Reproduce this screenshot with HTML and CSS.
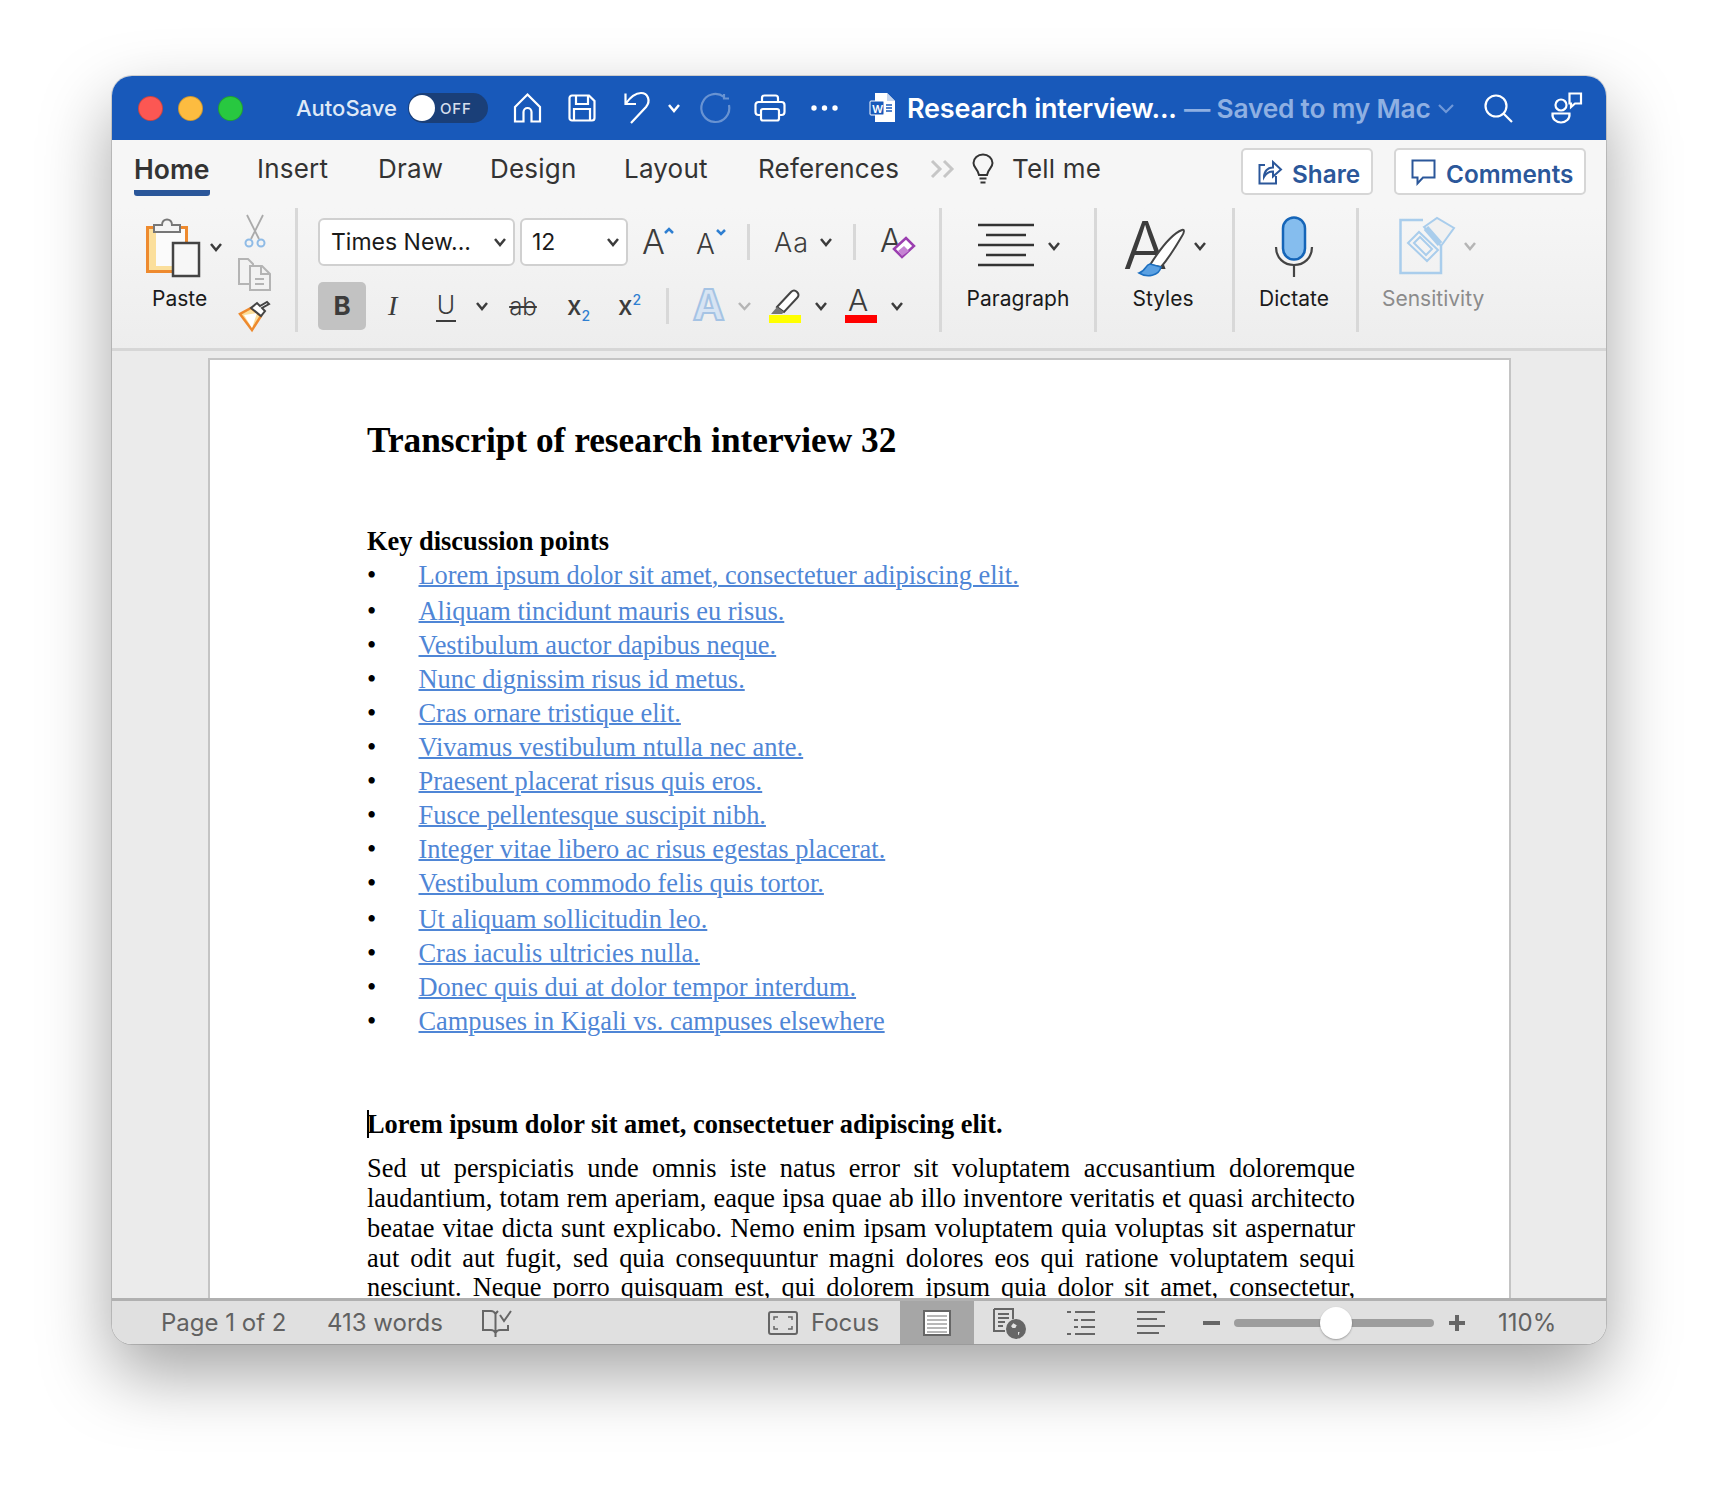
FILE: index.html
```html
<!DOCTYPE html>
<html lang="en">
<head>
    <meta charset="UTF-8">
    <title>Research interview - Word</title>
    <link rel="stylesheet" href="styles.css">
</head>
<body>
    <div class="window">
        <header class="titlebar">
            <span class="light light-red"></span>
            <span class="light light-yellow"></span>
            <span class="light light-green"></span>
            <span class="autosave">AutoSave</span>
            <span class="toggle"><span class="knob"></span><span class="toggle-text">OFF</span></span>
            <svg class="tb-home" width="29" height="30" viewBox="0 0 29 30"><path d="M2 14 14.5 1.5 27 14V28.5H18.5V19a4 4 0 0 0-8 0V28.5H2Z"/></svg>
            <svg class="tb-save" width="28" height="28" viewBox="0 0 28 28"><path d="M4 1.5H21L26.5 7V24a2.5 2.5 0 0 1-2.5 2.5H4A2.5 2.5 0 0 1 1.5 24V4A2.5 2.5 0 0 1 4 1.5Z"/><path d="M8 1.5V10H20V1.5M6 26.5V15H22V26.5"/></svg>
            <svg class="tb-undo" width="26" height="32" viewBox="0 0 26 32"><path d="M1.5 1.5V12H12M1.5 12C7 4 13 1 17 1 24 1 27 9 22 15L7 31"/></svg>
            <svg class="chev chev-white tb-undo-chev" width="12" height="8" viewBox="0 0 12 8"><path d="M1 1 6 7 11 1"/></svg>
            <svg class="tb-redo" width="30" height="30" viewBox="0 0 30 30"><path d="M23 4A14 14 0 1 0 28 12M23 1V5.500H28"/></svg>
            <svg class="tb-print" width="32" height="28" viewBox="0 0 32 28"><path d="M8 8V4A2.500 2.500 0 0 1 10.500 1.500H21.500A2.500 2.500 0 0 1 24 4V8"/><path d="M7 21H4.500A3 3 0 0 1 1.500 18V11A3 3 0 0 1 4.500 8H27.500A3 3 0 0 1 30.500 11V18A3 3 0 0 1 27.500 21H25"/><rect x="7" y="15" width="18" height="11.500" rx="2"/></svg>
            <svg class="tb-dots" width="27" height="6" viewBox="0 0 27 6"><circle cx="3" cy="3" r="2.700"/><circle cx="13.500" cy="3" r="2.700"/><circle cx="24" cy="3" r="2.700"/></svg>
            <svg class="tb-doc" width="26" height="30" viewBox="0 0 26 30"><path class="doc-page" d="M5 0H17L25 8V29H5Z"/><path class="doc-fold" d="M17 0V8H25Z"/><rect class="doc-badge" x="0" y="8" width="14" height="14" rx="1"/><text x="2" y="19.500" class="doc-w">W</text><path class="doc-lines" d="M16 12H22M16 15H22M16 18H22"/></svg>
            <span class="doc-title">Research interview...</span>
            <span class="doc-saved">— Saved to my Mac</span>
            <svg class="chev tb-title-chev" width="16" height="9" viewBox="0 0 16 9"><path d="M1 1 8 8 15 1"/></svg>
            <svg class="tb-search" width="29" height="29" viewBox="0 0 29 29"><circle cx="12" cy="12" r="10.500"/><path d="M19.500 19.500 28 28"/></svg>
            <svg class="tb-people" width="32" height="32" viewBox="0 0 32 32"><circle cx="10" cy="13" r="5.500"/><path d="M1.500 21.500H18.500C19 27 15 30.500 10 30.500S1 27 1.500 21.500Z"/><path d="M18.500 1.500H30V11.500H24L20 15V11.500H18.500Z"/></svg>
        </header>

        <nav class="tabs">
            <span class="tab tab-home">Home</span>
            <span class="tab tab-insert">Insert</span>
            <span class="tab tab-draw">Draw</span>
            <span class="tab tab-design">Design</span>
            <span class="tab tab-layout">Layout</span>
            <span class="tab tab-references">References</span>
            <svg class="tab-more" width="25" height="18" viewBox="0 0 25 18"><path d="M2 1 10 9 2 17M14 1 22 9 14 17"/></svg>
            <svg class="tab-bulb" width="22" height="30" viewBox="0 0 22 30"><path d="M7 21C6 15 1.500 14 1.500 9A9.500 8.500 0 0 1 20.500 9C20.500 14 16 15 15 21Z"/><path d="M7.500 24.500H14.500M8.500 28.500H13.500"/></svg>
            <span class="tab tab-tell">Tell me</span>
            <button class="pill pill-share">
                <svg width="24" height="26" viewBox="0 0 24 26"><path d="M7 6H1.500V24.500H18V17"/><path d="M6 18C6 12 10 8.500 15 8.500V3L23 10.500 15 17.500V12.500C11 12.500 8 14.500 6 18Z"/></svg>
                <span class="pill-text">Share</span>
            </button>
            <button class="pill pill-comments">
                <svg width="25" height="26" viewBox="0 0 25 26"><path d="M1.500 1.500H23.500V18.500H12L6.500 24.500V18.500H1.500Z"/></svg>
                <span class="pill-text">Comments</span>
            </button>
        </nav>

        <section class="ribbon">
            <div class="group group-clipboard">
                <div class="paste">
                    <svg class="paste-icon" width="62" height="60" viewBox="0 0 62 60">
                        <rect x="2.500" y="9.500" width="39" height="44" fill="#fbfbfb" stroke="#ee8a2e" stroke-width="3"/>
                        <path d="M4 11H11V48H28V52H4Z" fill="#fbdf9c"/>
                        <path d="M9 7H17C17 -0.500 27 -0.500 27 7H35V14H9Z" fill="#f4f4f4" stroke="#777" stroke-width="2"/>
                        <rect x="28" y="25" width="26" height="33" fill="#f7f7f7" stroke="#444" stroke-width="2.500"/>
                    </svg>
                    <svg class="chev paste-chev" width="12" height="8" viewBox="0 0 12 8"><path d="M1 1 6 7 11 1"/></svg>
                    <span class="label paste-label">Paste</span>
                </div>
                <div class="clip-tools">
                    <svg width="22" height="33" viewBox="0 0 22 33"><path d="M3 0 15 24M19 0 7 24" fill="none" stroke="#aaa" stroke-width="1.800"/><circle cx="5" cy="28" r="3.500" fill="none" stroke="#8fbbe6" stroke-width="2"/><circle cx="17" cy="28" r="3.500" fill="none" stroke="#8fbbe6" stroke-width="2"/></svg>
                    <svg width="33" height="33" viewBox="0 0 33 33" fill="#f2f2f2" stroke="#b4b4b4" stroke-width="2"><path d="M1 1H10L15 6V26H1Z"/><path d="M12 8H24L32 16V32H12Z"/><path d="M23 8V16H32M17 21H26M17 26H26" fill="none"/></svg>
                    <svg width="32" height="30" viewBox="0 0 32 30"><path d="M1 13 13 29 22 15 12 7Z" fill="#fbdf9c" stroke="#ee8a2e" stroke-width="2.500"/><path d="M5 14 18 12 13 27Z" fill="#fff"/><path d="M12 7 22 15 26 10 23 7 30 3 28 1 21 5 18 2Z" fill="#fff" stroke="#444" stroke-width="2"/></svg>
                </div>
            </div>
            <div class="group group-font">
                <div class="font-row">
                    <span class="select select-font">Times New...<svg class="chev" width="12" height="8" viewBox="0 0 12 8"><path d="M1 1 6 7 11 1"/></svg></span>
                    <span class="select select-size">12<svg class="chev" width="12" height="8" viewBox="0 0 12 8"><path d="M1 1 6 7 11 1"/></svg></span>
                    <svg class="fi-grow" width="32" height="28" viewBox="0 0 32 28"><text class="glyph" x="0" y="26" font-size="34">A</text><path class="caret" d="M24 9 28 5 32 9" transform="translate(-1 -4)"/></svg>
                    <svg class="fi-shrink" width="32" height="26" viewBox="0 0 32 26"><text class="glyph" x="0" y="25" font-size="28">A</text><path class="caret" d="M21 1 25 5 29 1"/></svg>
                    <span class="vsep vsep-a"></span>
                    <span class="case">Aa</span>
                    <svg class="chev case-chev" width="12" height="8" viewBox="0 0 12 8"><path d="M1 1 6 7 11 1"/></svg>
                    <span class="vsep vsep-b"></span>
                    <svg class="fi-clear" width="36" height="34" viewBox="0 0 36 34"><text class="glyph" x="0" y="27" font-size="32">A</text><path d="M14 24 26 13 34 21 22 32Z" fill="#fff" stroke="#9b3fb0" stroke-width="2.500"/><path d="M18 26 24 21 29 26 22 31Z" fill="#c583d3"/></svg>
                </div>
                <div class="format-row">
                    <span class="fmt-bold">B</span>
                    <span class="fmt-italic">I</span>
                    <span class="fmt-under">U</span>
                    <svg class="chev under-chev" width="12" height="8" viewBox="0 0 12 8"><path d="M1 1 6 7 11 1"/></svg>
                    <span class="fmt-strike">ab</span>
                    <span class="fmt-sub">x<sub>2</sub></span>
                    <span class="fmt-sup">x<sup>2</sup></span>
                    <span class="vsep vsep-c"></span>
                    <svg class="fi-effect" width="32" height="34" viewBox="0 0 32 34"><text x="0" y="31" font-size="42" class="glyph-effect">A</text></svg>
                    <svg class="chev chev-dim effect-chev" width="13" height="8" viewBox="0 0 13 8"><path d="M1 1 6.500 7 12 1"/></svg>
                    <svg class="fi-marker" width="32" height="34" viewBox="0 0 32 34"><path d="M8 18 22 3C24 1 26 1 28 3 30 5 30 7 28 9L15 23Z" fill="#fff" stroke="#444" stroke-width="2"/><path d="M8 18 2 25H13L15 23Z" fill="#777"/><rect x="0" y="26" width="32" height="8" fill="#ffff00"/></svg>
                    <svg class="chev marker-chev" width="12" height="8" viewBox="0 0 12 8"><path d="M1 1 6 7 11 1"/></svg>
                    <svg class="fi-color" width="32" height="34" viewBox="0 0 32 34"><text class="glyph" x="3" y="22" font-size="30">A</text><rect x="0" y="26" width="32" height="8" fill="#ff0000"/></svg>
                    <svg class="chev color-chev" width="12" height="8" viewBox="0 0 12 8"><path d="M1 1 6 7 11 1"/></svg>
                </div>
            </div>
            <div class="group group-para">
                <svg class="para-icon" width="56" height="42" viewBox="0 0 56 42"><path d="M0 1H56M8 11H48M0 21H56M8 31H48M0 41H56"/></svg>
                <svg class="chev para-chev" width="12" height="8" viewBox="0 0 12 8"><path d="M1 1 6 7 11 1"/></svg>
                <span class="label">Paragraph</span>
            </div>
            <div class="group group-styles">
                <svg class="styles-icon" width="72" height="56" viewBox="0 0 72 56">
                    <text class="glyph" x="-1" y="48" font-size="66">A</text>
                    <path d="M26 44C38 25 50 12 58 9 61 8 60 12 58 15 51 27 44 38 37 46Z" fill="#fff" stroke="#444" stroke-width="2"/>
                    <path d="M26 43C21 44 22 50 15 52 23 57 35 55 37 46Z" fill="#5aa0e2" stroke="#1c6fc0" stroke-width="1.500"/>
                </svg>
                <svg class="chev styles-chev" width="12" height="8" viewBox="0 0 12 8"><path d="M1 1 6 7 11 1"/></svg>
                <span class="label label-shift">Styles</span>
            </div>
            <div class="group group-dictate">
                <svg class="mic-icon" width="38" height="62" viewBox="0 0 38 62"><rect x="8" y="1.500" width="22" height="42" rx="11" fill="#85bdee" stroke="#1565b8" stroke-width="2.500"/><path d="M1 31C1 42 9 49 19 49S37 42 37 31M19 49V61" fill="none" stroke="#444" stroke-width="2.200"/></svg>
                <span class="label label-shift">Dictate</span>
            </div>
            <div class="group group-sens">
                <svg class="sens-icon" width="56" height="58" viewBox="0 0 56 58" fill="none" stroke="#a9cdec" stroke-width="2.500">
                    <path d="M24 3H1.500V56H42V29"/>
                    <path d="M9 26 20 15 39 33 28 44ZM15 26 21 20 33 32 27 38Z" stroke-width="2"/>
                    <path d="M25 10 38 1 55 11 42 29Z" fill="#f1f1f1" stroke-width="2"/>
                    <path d="M27 11 41 27" stroke-width="6"/>
                </svg>
                <svg class="chev chev-dim sens-chev" width="12" height="8" viewBox="0 0 12 8"><path d="M1 1 6 7 11 1"/></svg>
                <span class="label label-dim">Sensitivity</span>
            </div>
        </section>

        <main class="docarea">
            <article class="page">
                <h1>Transcript of research interview 32</h1>
                <h2>Key discussion points</h2>
                <ul>
                    <li><a href="#">Lorem ipsum dolor sit amet, consectetuer adipiscing elit.</a></li>
                    <li class="li-gap"><a href="#">Aliquam tincidunt mauris eu risus.</a></li>
                    <li><a href="#">Vestibulum auctor dapibus neque.</a></li>
                    <li><a href="#">Nunc dignissim risus id metus.</a></li>
                    <li><a href="#">Cras ornare tristique elit.</a></li>
                    <li><a href="#">Vivamus vestibulum ntulla nec ante.</a></li>
                    <li><a href="#">Praesent placerat risus quis eros.</a></li>
                    <li><a href="#">Fusce pellentesque suscipit nibh.</a></li>
                    <li><a href="#">Integer vitae libero ac risus egestas placerat.</a></li>
                    <li><a href="#">Vestibulum commodo felis quis tortor.</a></li>
                    <li class="li-gap"><a href="#">Ut aliquam sollicitudin leo.</a></li>
                    <li><a href="#">Cras iaculis ultricies nulla.</a></li>
                    <li><a href="#">Donec quis dui at dolor tempor interdum.</a></li>
                    <li><a href="#">Campuses in Kigali vs. campuses elsewhere</a></li>
                </ul>
                <h3><span class="cursor"></span>Lorem ipsum dolor sit amet, consectetuer adipiscing elit.</h3>
                <p>Sed ut perspiciatis unde omnis iste natus error sit voluptatem accusantium doloremque laudantium, totam rem aperiam, eaque ipsa quae ab illo inventore veritatis et quasi architecto beatae vitae dicta sunt explicabo. Nemo enim ipsam voluptatem quia voluptas sit aspernatur aut odit aut fugit, sed quia consequuntur magni dolores eos qui ratione voluptatem sequi nesciunt. Neque porro quisquam est, qui dolorem ipsum quia dolor sit amet, consectetur,</p>
            </article>
        </main>

        <footer class="statusbar">
            <span class="st-page">Page 1 of 2</span>
            <span class="st-words">413 words</span>
            <svg class="st-book" width="30" height="28" viewBox="0 0 30 28"><path d="M1 2H9C11 2 12.500 3 13.500 5V24C12.500 22 11 21 9 21H1ZM13.500 5C14 4 15 3 16 2M13.500 24C14.500 22 16 21 18 21H26V16M13.500 24V28"/><path d="M18 6 22 12 29 2"/></svg>
            <svg class="st-focus" width="30" height="24" viewBox="0 0 30 24"><rect x="1" y="1" width="28" height="22" rx="2"/><path d="M6 9V6H10M20 6H24V9M24 15V18H20M10 18H6V15" stroke-width="1.500"/></svg>
            <span class="st-focus-text">Focus</span>
            <span class="st-view">
                <svg width="28" height="26" viewBox="0 0 28 26"><rect x="1" y="1" width="26" height="24" fill="#fff"/><path d="M4 6H24M4 10H24M4 14H24M4 18H24M4 22H24" stroke="#a0a0a0" stroke-width="1.500"/></svg>
            </span>
            <svg class="st-web" width="32" height="30" viewBox="0 0 32 30"><path d="M1 1H20V11M12 23H1V1M5 6H16M5 10H16M5 14H12M5 18H10" fill="none" stroke="#666" stroke-width="2"/><circle cx="23" cy="21" r="9" fill="#666"/><path d="M20 14 25 17 23 21 19 21 17 18ZM24 23 28 23 26 29 24 28Z" fill="#e2e2e2"/></svg>
            <svg class="st-outline" width="28" height="24" viewBox="0 0 28 24"><path d="M0 1H4M8 1H28M7 9H11M14 9H28M7 16H11M14 16H28M0 23H4M8 23H28"/></svg>
            <svg class="st-draft" width="28" height="24" viewBox="0 0 28 24"><path d="M0 1H28M0 8H20M0 15H28M0 22H22"/></svg>
            <span class="zoom-minus"></span>
            <span class="slider"><span class="thumb"></span></span>
            <span class="zoom-plus"></span>
            <span class="st-zoom">110%</span>
        </footer>
    </div>
</body>
</html>
```

FILE: styles.css
```css
* {
    box-sizing: border-box;
}

html,
body {
    margin: 0;
    height: 1492px;
    overflow: hidden;
}

body {
    padding: 76px 112px 0;
    background-color: #fff;
    font-family: Inter, "Liberation Sans", sans-serif;
}

svg {
    display: block;
    flex: none;
    overflow: visible;
}

.window {
    display: flex;
    flex-direction: column;
    width: 1494px;
    height: 1268px;
    border-radius: 20px;
    overflow: hidden;
    box-shadow: 0 30px 70px rgba(0, 0, 0, .36), 0 0 0 1px rgba(0, 0, 0, .14);
}

/* title bar */

.titlebar {
    display: flex;
    align-items: center;
    flex: none;
    height: 64px;
    padding-left: 26px;
    background-color: #1859ba;
    color: #fff;
}

.titlebar svg {
    fill: none;
    stroke: #fff;
    stroke-width: 2.2;
}

.light {
    width: 25px;
    height: 25px;
    margin-right: 15px;
    border-radius: 50%;
    border: 1px solid rgba(0, 0, 0, .2);
}

.light-red { background-color: #fc5753; }
.light-yellow { background-color: #fdbc40; }
.light-green { background-color: #28c840; }

.autosave {
    width: 101px;
    margin-left: 38px;
    font-size: 22px;
    font-weight: 500;
    color: #dfe9f7;
    white-space: nowrap;
}

.toggle {
    display: flex;
    align-items: center;
    width: 80px;
    height: 30px;
    margin-left: 11px;
    padding-left: 1px;
    border-radius: 15px;
    background-color: #1a3f78;
}

.knob {
    width: 26px;
    height: 26px;
    border-radius: 50%;
    background-color: #fff;
}

.toggle-text {
    margin-left: 5px;
    font-size: 15px;
    font-weight: 500;
    letter-spacing: .8px;
    color: #d5deec;
}

.tb-home { margin-left: 25px; }
.tb-save { margin-left: 26px; }
.tb-undo { margin-left: 28px; }
.tb-undo-chev { margin-left: 18px; }
.tb-redo { margin-left: 21px; opacity: .35; }
.tb-print { margin-left: 23px; }
.tb-dots { margin-left: 25px; }
.titlebar .tb-dots { fill: #fff; stroke: none; }
.tb-doc { margin-left: 32px; }

.titlebar .doc-page { fill: #fff; stroke: none; }
.titlebar .doc-fold { fill: #c5d5ee; stroke: none; }
.titlebar .doc-badge { fill: #1859ba; stroke: #fff; stroke-width: 1; }
.titlebar .doc-lines { stroke: #1859ba; stroke-width: 1.500; }
.doc-w {
    font-size: 11px;
    font-weight: 600;
    fill: #fff;
    stroke: none;
}

.doc-title {
    width: 269px;
    margin-left: 11px;
    font-size: 27px;
    font-weight: 600;
    letter-spacing: -.2px;
    white-space: nowrap;
}

.doc-saved {
    width: 247px;
    margin-left: 8px;
    font-size: 26.300px;
    font-weight: 600;
    letter-spacing: -.2px;
    color: #8fb0e2;
    white-space: nowrap;
}

.titlebar .tb-title-chev { margin-left: 7px; stroke: #6f98d8; }
.tb-search { margin-left: 30px; }
.tb-people { margin-left: 38px; }

/* tabs */

.chev {
    fill: none;
    stroke: #3c3c3c;
    stroke-width: 2.500;
}

.chev-dim {
    stroke: #b5b5b5;
}

.titlebar .chev-white {
    stroke: #fff;
    stroke-width: 2.500;
}

.tabs {
    display: flex;
    align-items: flex-start;
    flex: none;
    height: 68px;
    background-color: #f6f6f6;
}

.tab {
    margin-top: 14px;
    font-size: 26px;
    letter-spacing: .2px;
    line-height: 30px;
    color: #333;
    white-space: nowrap;
}

.tab-home {
    width: 76px;
    height: 42px;
    margin-left: 22px;
    border-bottom: 6px solid #2b579a;
    border-radius: 0 0 3px 3px;
    font-size: 26.500px;
    font-weight: 600;
    letter-spacing: 0;
}

.tab-insert { width: 72px; margin-left: 47px; }
.tab-draw { width: 63px; margin-left: 49px; }
.tab-design { width: 86px; margin-left: 49px; }
.tab-layout { width: 84px; margin-left: 48px; }
.tab-references { width: 139px; margin-left: 50px; }

.tab-more {
    margin: 20px 0 0 33px;
    fill: none;
    stroke: #c6c6c6;
    stroke-width: 3;
}

.tab-bulb {
    margin: 14px 0 0 17px;
    fill: none;
    stroke: #333;
    stroke-width: 2;
}

.tab-tell { width: 86px; margin-left: 18px; }

.pill {
    display: flex;
    align-items: center;
    gap: 10px;
    height: 47px;
    margin-top: 8px;
    padding: 0 0 0 15px;
    border: 2px solid #d6d6d6;
    border-radius: 5px;
    background-color: #fff;
    font-family: inherit;
    font-size: 24.300px;
    font-weight: 600;
    color: #2b579a;
}

.pill svg {
    fill: none;
    stroke: #2b579a;
    stroke-width: 2;
}

.pill-text {
    padding-top: 4px;
}

.pill-share {
    width: 132px;
    margin-left: 143px;
}

.pill-comments {
    width: 192px;
    margin-left: 21px;
}

/* ribbon */

.ribbon {
    display: flex;
    flex: none;
    height: 143px;
    border-bottom: 3px solid #d6d6d6;
    background: linear-gradient(#f6f6f6, #ededed);
}

.group {
    position: relative;
    height: 124px;
    border-right: 3px solid #d8d8d8;
}

.glyph {
    font-family: Inter, sans-serif;
    font-weight: 300;
    fill: #3c3c3c;
}

.label {
    position: absolute;
    top: 78px;
    left: 0;
    right: 0;
    font-size: 21px;
    line-height: 26px;
    text-align: center;
    color: #1a1a1a;
}

.label-dim {
    color: #8b8b8b;
}

.label-shift {
    right: 3px;
}

.group-clipboard {
    display: flex;
    width: 186px;
}

.paste {
    position: relative;
    width: 121px;
}

.paste-icon {
    position: absolute;
    top: 10px;
    left: 33px;
}

.paste-chev {
    position: absolute;
    top: 35px;
    left: 98px;
}

.paste-label {
    left: 40px;
    right: auto;
}

.clip-tools {
    display: flex;
    flex-direction: column;
    align-items: center;
    gap: 10px;
    width: 33px;
    padding-top: 7px;
    margin-left: 5px;
}

.group-font {
    width: 644px;
}

.font-row,
.format-row {
    display: flex;
    align-items: center;
}

.font-row {
    height: 48px;
    margin: 10px 0 0 20px;
}

.format-row {
    height: 48px;
    margin: 16px 0 0 20px;
}

.select {
    display: flex;
    align-items: center;
    justify-content: space-between;
    height: 48px;
    padding: 0 7px 0 11px;
    border: 2px solid #d0d0d0;
    border-radius: 6px;
    background-color: #fff;
    font-size: 23px;
    color: #1a1a1a;
    white-space: nowrap;
}

.select-font { width: 197px; }
.select-size { width: 108px; margin-left: 5px; padding-left: 10px; }

.caret {
    fill: none;
    stroke: #2f7fd1;
    stroke-width: 2.500;
}

.fi-grow { margin-left: 14px; }
.fi-shrink { margin-left: 22px; }

.vsep {
    flex: none;
    width: 3px;
    height: 36px;
    background-color: #d8d8d8;
}

.vsep-a { margin-left: 19px; }
.vsep-b { margin-left: 21px; }
.vsep-c { margin-left: 24px; }

.case {
    width: 33px;
    margin-left: 24px;
    font-size: 27px;
    font-weight: 300;
    letter-spacing: 1px;
    color: #3c3c3c;
}

.case-chev { margin-left: 13px; }
.fi-clear { margin-left: 24px; }

.fmt-bold {
    width: 48px;
    height: 48px;
    border-radius: 5px;
    background-color: #c2c2c2;
    font-size: 26px;
    font-weight: 700;
    line-height: 48px;
    text-align: center;
    color: #3c3c3c;
}

.fmt-italic {
    width: 14px;
    margin-left: 22px;
    font-family: "Liberation Serif", serif;
    font-size: 28px;
    font-style: italic;
    color: #3c3c3c;
}

.fmt-under {
    width: 20px;
    margin-left: 34px;
    padding-bottom: 1px;
    border-bottom: 2px solid #3c3c3c;
    font-size: 25px;
    font-weight: 300;
    line-height: 28px;
    text-align: center;
    color: #3c3c3c;
}

.under-chev { margin-left: 20px; }

.fmt-strike {
    width: 30px;
    margin-left: 20px;
    font-size: 24px;
    font-weight: 300;
    text-align: center;
    text-decoration: line-through;
    color: #3c3c3c;
}

.fmt-sub,
.fmt-sup {
    font-size: 26px;
    font-weight: 500;
    line-height: 30px;
    color: #3c3c3c;
}

.fmt-sub { width: 24px; margin-left: 29px; }
.fmt-sup { width: 24px; margin-left: 27px; }

.fmt-sub sub,
.fmt-sup sup {
    font-size: 14px;
    line-height: 0;
    color: #2f7fd1;
}

.fi-effect { margin-left: 24px; }
.glyph-effect {
    font-family: Inter, sans-serif;
    font-weight: 700;
    fill: #d7e4f3;
    stroke: #a5c3e4;
    stroke-width: 2;
}

.effect-chev { margin-left: 13px; }
.fi-marker { margin-left: 18px; }
.marker-chev { margin-left: 14px; }
.fi-color { margin-left: 18px; }
.color-chev { margin-left: 14px; }

.group-para { width: 155px; }
.group-styles { width: 138px; }
.group-dictate { width: 124px; }
.group-sens { flex: 1; border-right: none; }

.para-icon {
    position: absolute;
    top: 16px;
    left: 36px;
    stroke: #333;
    stroke-width: 2.500;
}

.para-chev {
    position: absolute;
    top: 34px;
    left: 106px;
}

.styles-icon {
    position: absolute;
    top: 13px;
    left: 27px;
}

.styles-chev {
    position: absolute;
    top: 34px;
    left: 97px;
}

.mic-icon {
    position: absolute;
    top: 8px;
    left: 40px;
}

.sens-icon {
    position: absolute;
    top: 9px;
    left: 40px;
}

.sens-chev {
    position: absolute;
    top: 34px;
    left: 105px;
}

.group-sens .label {
    left: 23px;
    right: auto;
}

/* document */

.docarea {
    flex: 1;
    min-height: 0;
    padding: 7px 0 0 97px;
    overflow: hidden;
    background-color: #ebebeb;
}

.page {
    width: 1303px;
    height: 1000px;
    margin-left: -1px;
    padding: 59px 154px 0 157px;
    border: 2px solid #c4c4c4;
    background-color: #fff;
    font-family: "Liberation Serif", "Times New Roman", serif;
    font-size: 26.400px;
    line-height: 29.850px;
    color: #000;
}

h1 {
    margin: 0;
    font-size: 35.300px;
    line-height: 44px;
}

h2 {
    margin: 62px 0 1px;
    font-size: 26.400px;
    line-height: 32px;
}

h3 {
    position: relative;
    margin: 70px 0 0;
    font-size: 26.400px;
    line-height: 32px;
}

.cursor {
    position: absolute;
    top: 2px;
    left: 0;
    width: 2px;
    height: 28px;
    background-color: #000;
}

ul {
    margin: 0;
    padding: 0;
    list-style: none;
}

li {
    display: flex;
    height: 34px;
    line-height: 34px;
}

li::before {
    content: "•";
    flex: none;
    width: 51.500px;
}

.li-gap {
    margin-top: 2px;
}

a {
    color: #4f86d6;
    text-decoration: underline;
    text-decoration-thickness: 2px;
}

p {
    margin: 14px 0 0;
    text-align: justify;
    text-align-last: justify;
}

/* status bar */

.statusbar {
    display: flex;
    align-items: center;
    flex: none;
    height: 46px;
    border-top: 3px solid #b0b0b0;
    background-color: #e0e0e0;
    font-size: 24px;
    color: #616161;
    white-space: nowrap;
}

.statusbar svg {
    fill: none;
    stroke: #666;
    stroke-width: 2;
}

.st-page { width: 124px; margin-left: 49px; }
.st-words { width: 115px; margin-left: 42px; }
.st-book { margin-left: 40px; }
.st-focus { margin-left: 256px; }
.st-focus-text { width: 67px; margin-left: 13px; }

.st-view {
    display: flex;
    align-items: center;
    justify-content: center;
    align-self: stretch;
    width: 74px;
    margin-left: 22px;
    background-color: #a6a6a6;
}

.st-web { margin-left: 19px; }
.st-outline { margin-left: 42px; }
.st-draft { margin-left: 42px; }

.zoom-minus {
    flex: none;
    width: 17px;
    height: 4px;
    margin-left: 38px;
    background-color: #666;
}

.slider {
    position: relative;
    width: 200px;
    height: 8px;
    margin-left: 14px;
    border-radius: 4px;
    background-color: #9d9d9d;
}

.thumb {
    position: absolute;
    top: -12px;
    left: 86px;
    width: 32px;
    height: 32px;
    border-radius: 50%;
    background-color: #fff;
    box-shadow: 0 1px 2px rgba(0, 0, 0, .3);
}

.zoom-plus {
    flex: none;
    width: 16px;
    height: 16px;
    margin-left: 15px;
    background:
        linear-gradient(#666, #666) center / 16px 4px no-repeat,
        linear-gradient(#666, #666) center / 4px 16px no-repeat;
}

.st-zoom { margin-left: 33px; }
```
